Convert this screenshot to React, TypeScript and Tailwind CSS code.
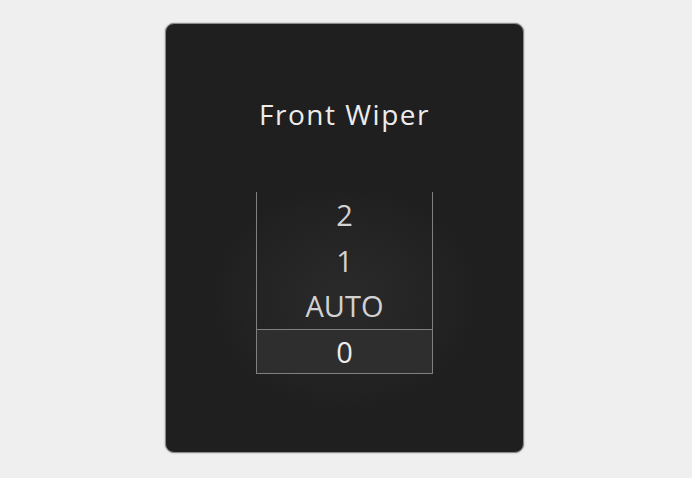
export default function App() {
  const items = ["2", "1", "AUTO"];
  return (
    <div className="w-[692px] h-[478px] bg-[#efefef] pt-[23px] pl-[165px]" style={{ fontFamily: "'Open Sans', Roboto, sans-serif" }}>
      <div className="w-[359px] h-[430px] rounded-[9px] bg-[#1f1f1f] border border-[#8a8a8a] shadow-[0_0_2px_rgba(0,0,0,0.35)] flex flex-col items-center">
        <div className="mt-[73px] text-[28px] leading-[34px] font-medium text-[#ececec] tracking-[1.5px]">Front Wiper</div>
        <div className="mt-[57px] w-[260px] h-[220px] flex justify-center items-start pt-[1px] bg-[radial-gradient(ellipse_at_center,#2a2a2a_0%,#242424_45%,#1f1f1f_72%)]">
          <div className="mt-[3px] w-[177px] border-l border-r border-[#808080] flex flex-col">
            {items.map((t) => (
              <div key={t} className="h-[45.6px] flex items-center justify-center text-[29px] text-[#d2d2d2]">{t}</div>
            ))}
            <div className="h-[45px] flex items-center justify-center text-[29px] text-[#ececec] bg-[#2e2e2e] border-t border-b border-[#808080]">0</div>
          </div>
        </div>
      </div>
    </div>
  );
}
